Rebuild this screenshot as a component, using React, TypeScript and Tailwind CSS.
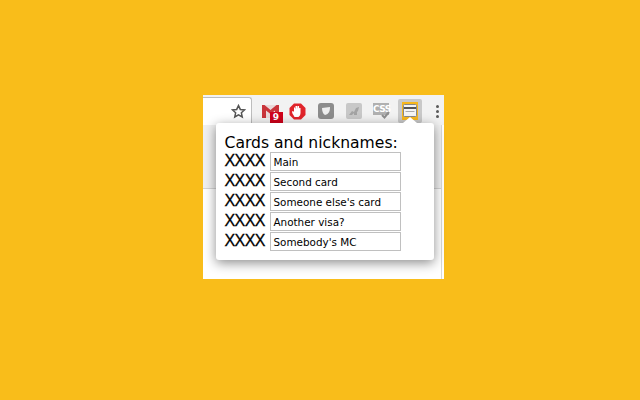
const cards = ["Main", "Second card", "Someone else's card", "Another visa?", "Somebody's MC"];

const ToolbarIcons = () => (
  <div className="flex items-center ml-[4px]">
    {/* gmail */}
    <div className="w-[28px] flex justify-end pr-[1px]">
      <div className="relative w-[21px] h-[24px]">
        <svg width="17" height="15" viewBox="0 0 17 15" className="absolute left-0 top-[5px]">
          <path d="M1 1h15v13H1z" fill="#ead9d9" />
          <path d="M0 1h2.500l6 5 6-5H17v13h-4V6.500L8.500 10 4 6.500V14H0z" fill="#c9343a" />
        </svg>
        <span className="absolute left-[8px] top-[13px] w-[13px] h-[11px] bg-[#d0021b] text-white text-[9px] leading-[11px] font-bold text-center">
          9
        </span>
      </div>
    </div>
    {/* stop hand */}
    <div className="w-[28px] flex justify-center">
      <svg width="17" height="17" viewBox="0 0 17 17">
        <path d="M5 .5h7L16.500 5v7L12 16.500H5L.5 12V5z" fill="#e0242b" />
        <path d="M5.500 14C4.500 12 3 10.500 3 8.500l1-.5 1 1V4.500h1l.5 2V3h1.500l.5 3V3h1.500l.3 3.500V5h1.200v5c0 2-1 3-2 4z" fill="#fff" />
      </svg>
    </div>
    <div className="w-[28px] flex justify-center">
      <div className="w-[16px] h-[16px] rounded-[3px] bg-[#8c8c8c] flex items-center justify-center">
        <svg width="10" height="10" viewBox="0 0 10 10">
          <path d="M1 2l8-1c0 4-1 7-5 8-2-1-3-4-3-7z" fill="#eee" />
        </svg>
      </div>
    </div>
    <div className="w-[28px] flex justify-center">
      <div className="w-[16px] h-[16px] rounded-[2px] bg-[#c8c8c8] flex items-center justify-center">
        <svg width="12" height="12" viewBox="0 0 12 12">
          <path d="M1 10l3-4 2 1 2-4 3-1-1 4-1 1v3H6V8l-2 2z" fill="#a3a3a3" />
        </svg>
      </div>
    </div>
    <div className="w-[28px] flex justify-center">
      <div className="relative w-[17px] h-[16px]">
        <div className="w-[16px] h-[12px] bg-[#b0b0b0] text-white text-[9px] leading-[12px] font-bold text-center tracking-[-0.5px]">CSS</div>
        <svg width="9" height="8" viewBox="0 0 9 8" className="absolute right-0 bottom-0">
          <path d="M1 4l2.500 2.500L8 1" fill="none" stroke="#8f8f8f" strokeWidth="2" />
        </svg>
      </div>
    </div>
    <div className="w-[28px] flex justify-center">
      <div className="w-[24px] h-[24px] rounded-[2px] bg-[#c9c9c9] flex items-center justify-center">
        <div className="w-[16px] h-[18px] bg-[#f7b71c] flex items-start justify-center pt-[2px]">
          <svg width="14" height="13" viewBox="0 0 14 13">
            <rect x=".5" y=".5" width="13" height="12" rx="1" fill="#f5f5f5" stroke="#888" />
            <rect x="1" y="3" width="12" height="2" fill="#555" />
            <rect x="2.500" y="7" width="9" height="1" fill="#aaa" />
          </svg>
        </div>
      </div>
    </div>
    <div className="w-[22px] flex justify-end pr-[7px]">
      <div className="flex flex-col gap-[2px]">
        <span className="w-[3px] h-[3px] rounded-full bg-[#5a5a5a]" />
        <span className="w-[3px] h-[3px] rounded-full bg-[#5a5a5a]" />
        <span className="w-[3px] h-[3px] rounded-full bg-[#5a5a5a]" />
      </div>
    </div>
  </div>
);

const App = () => {
  return (
    <div
      className="w-[640px] h-[400px] bg-[#f9bd1a] flex items-center justify-center overflow-hidden"
      style={{ fontFamily: '"DejaVu Sans", sans-serif' }}
    >
      <div className="relative w-[241px] h-[184px] bg-white flex flex-col -mt-[26px] translate-x-[3px]">
        <div className="h-[30px] bg-[#f2f2f2] flex items-start shrink-0">
          <div className="w-[49px] h-[30px] shrink-0 mt-[2px] bg-white border-t border-r border-[#bdbdbd] rounded-tr-[3px] flex justify-end pr-[5px] pt-[6px]">
            <svg width="15" height="15" viewBox="0 0 24 24" fill="none" stroke="#555" strokeWidth="2.400">
              <path d="M12 2.500l2.900 6.200 6.700.8-5 4.600 1.400 6.700L12 17.400l-6 3.400 1.400-6.700-5-4.600 6.700-.8z" />
            </svg>
          </div>
          <div className="pt-[4px]">
            <ToolbarIcons />
          </div>
        </div>
        <div className="flex flex-1 min-h-0">
          <div className="flex-1 flex flex-col">
            <div className="h-[64px] bg-[#f0f0f0] border-b border-[#d4d4d4]" />
          </div>
          <div className="w-[3px] border-l border-[#d8d8d8] bg-white" />
        </div>

        {/* popup */}
        <div className="absolute left-[13px] top-[28px] w-[218px] h-[137px] bg-white rounded-[3px] shadow-[0_3px_12px_rgba(0,0,0,0.45)] pl-[9px] pt-[11px]">
          <div className="absolute right-[17px] -top-[6px] w-0 h-0 border-x-[7px] border-x-transparent border-b-[6px] border-b-white" />
          <div className="text-[15.6px] leading-[18px] text-black">Cards and nicknames:</div>
          {cards.map((name) => (
            <div key={name} className="flex items-start h-[20px]">
              <span
                className="w-[45px] shrink-0 text-[16px] leading-[17px] tracking-[-0.6px] text-black [-webkit-text-stroke:0.3px_black]"
                style={{ fontFamily: '"Liberation Sans", sans-serif' }}
              >
                XXXX
              </span>
              <div className="w-[131px] h-[19px] border border-[#c0c0c0] pl-[3px] pt-[1px] text-[10.4px] leading-[16px] text-black whitespace-nowrap">
                {name}
              </div>
            </div>
          ))}
        </div>
      </div>
    </div>
  );
};

export default App;
